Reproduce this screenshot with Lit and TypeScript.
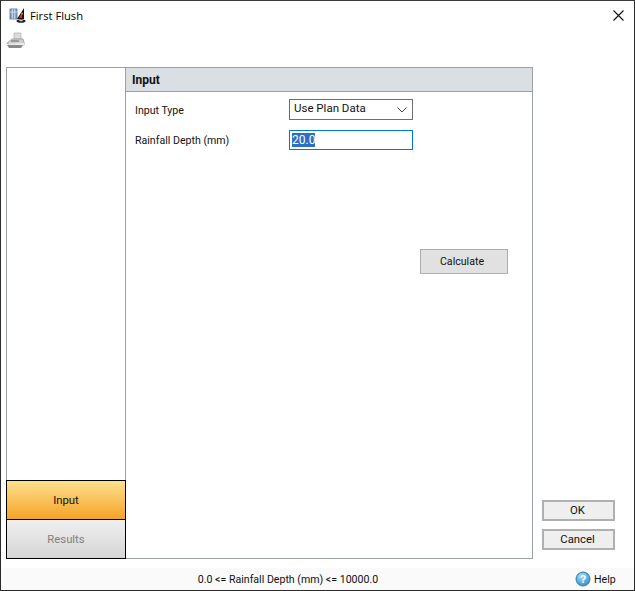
import { LitElement, html, css } from "lit";
import { customElement } from "lit/decorators.js";

@customElement("app-root")
export class AppRoot extends LitElement {
  static styles = css`
    :host { display: block; width: 635px; height: 591px; }
    * { box-sizing: border-box; }
    .win { width: 635px; height: 591px; border: 1px solid #2b2b2b; border-top-color: #3a3a3a; background: #fff; display: flex; flex-direction: column; font: 10.6px Roboto, "Liberation Sans", Arial, sans-serif; color: #111; }
    .title { height: 29px; display: flex; align-items: center; padding: 0 10px 0 8px; flex: none; }
    .title .t { font: 11.2px "Open Sans", sans-serif; margin-left: 4px; color: #000; }
    .close { margin-left: auto; display: flex; }
    .tool { height: 37px; flex: none; padding: 2px 0 0 5px; }
    .main { flex: 1; display: flex; min-height: 0; padding: 0 0 9px 5px; }
    .panel { width: 527px; border: 1px solid #9aa0a4; display: flex; }
    .left { width: 120px; flex: none; display: flex; flex-direction: column; border-right: 1px solid #9aa0a4; margin: 0 0 -1px -1px; }
    .spacer { flex: 1; border-left: 1px solid #9aa0a4; }
    .tab { height: 40px; border: 1px solid #000; display: flex; align-items: center; justify-content: center; margin-right: -1px; font-size: 11.3px; }
    .tab.on { background: linear-gradient(#fde08e, #f5a326); color: #111; }
    .tab.off { margin-top: -1px; background: linear-gradient(#efefef, #d6d6d6); color: #808080; }
    .right { flex: 1; display: flex; flex-direction: column; min-width: 0; }
    .head { height: 24px; background: #dadfe3; border-bottom: 1px solid #9aa0a4; display: flex; align-items: center; padding-left: 6px; font-weight: 700; font-size: 12px; flex: none; }
    .form { flex: 1; padding: 7px 0 0 9px; display: flex; flex-direction: column; }
    .row { display: flex; align-items: center; height: 22px; }
    .row + .row { margin-top: 8px; }
    .row label { width: 154px; flex: none; }
    .select { width: 124px; height: 21px; border: 1px solid #6e6e6e; display: flex; align-items: center; padding: 0 5px 0 4px; justify-content: space-between; margin-top: -1px; font-size: 11.5px; }
    .select span { margin-top: -3px; }
    .input { width: 124px; height: 20px; border: 1px solid #0078d7; display: flex; align-items: center; padding-left: 2px; font-size: 12px; }
    .sel { background: #2a70c4; color: #fff; line-height: 14px; }
    .calcrow { display: flex; justify-content: flex-end; padding-right: 24px; margin-top: 98px; }
    button { font: inherit; color: #111; padding: 0; }
    .calc { width: 88px; height: 25px; background: #e1e1e1; border: 1px solid #adadad; padding-right: 4px; }
    .side { flex: 1; display: flex; flex-direction: column; align-items: flex-end; justify-content: flex-end; padding: 0 19px 9px 0; gap: 8px; }
    .btn { width: 73px; height: 21px; background: #efefef; border: 2px solid #b0b0b0; font-size: 11.3px; padding-right: 2px; }
    .status { height: 22px; flex: none; background: #fafafa; display: flex; align-items: center; }
    .msg { width: 574px; text-align: center; }
    .help { display: flex; align-items: center; gap: 3px; }
  `;

  render() {
    return html`<div class="win">
      <div class="title">
        <svg width="17" height="17" viewBox="0 0 17 17">
          <rect x="1" y="2" width="7" height="10" fill="#7d9fd0" stroke="#4f6fa0" stroke-width="0.8"/>
          <path d="M3.300 2v10M5.700 2v10M1 5h7" stroke="#dce6f4" stroke-width="0.8"/>
          <path d="M8 12 L15 1 V12 Z" fill="#111"/>
          <path d="M10 11l2-4 1.500 1-.5 3z" fill="#d02a2a"/>
          <path d="M12 7l1-2 .8 1.500-.5 1.500z" fill="#e8c02a"/>
          <ellipse cx="12" cy="14" rx="4.500" ry="1.800" fill="#222"/>
          <ellipse cx="12" cy="13.600" rx="2" ry=".7" fill="#ddd"/>
        </svg>
        <span class="t">First Flush</span>
        <span class="close"><svg width="11" height="11" viewBox="0 0 11 11"><path d="M.5.5l10 10M10.500.5l-10 10" stroke="#111" stroke-width="1.100" fill="none"/></svg></span>
      </div>
      <div class="tool">
        <svg width="20" height="18" viewBox="0 0 20 18">
          <path d="M8 1h7v6H8z" fill="#dcdcdc" stroke="#b5b5b5" stroke-width=".8"/>
          <path d="M1 11l5-4h11l1 3v3H3z" fill="#cfcfcf" stroke="#9a9a9a" stroke-width=".8"/>
          <path d="M2 12l12-1 4 0v2H3z" fill="#ececec"/>
          <path d="M1 13h16l-2 3H3z" fill="#8a8a8a"/>
          <path d="M5 9h8" stroke="#666" stroke-width="1"/>
        </svg>
      </div>
      <div class="main">
        <div class="panel">
          <div class="left">
            <div class="spacer"></div>
            <div class="tab on">Input</div>
            <div class="tab off">Results</div>
          </div>
          <div class="right">
            <div class="head">Input</div>
            <div class="form">
              <div class="row"><label>Input Type</label>
                <div class="select"><span>Use Plan Data</span>
                  <svg width="10" height="6" viewBox="0 0 10 6"><path d="M.5.5L5 5 9.500.5" stroke="#444" fill="none"/></svg>
                </div>
              </div>
              <div class="row"><label>Rainfall Depth (mm)</label>
                <div class="input"><span class="sel">20.0</span></div>
              </div>
              <div class="calcrow"><button class="calc">Calculate</button></div>
            </div>
          </div>
        </div>
        <div class="side">
          <button class="btn">OK</button>
          <button class="btn">Cancel</button>
        </div>
      </div>
      <div class="status">
        <div class="msg">0.0 &lt;= Rainfall Depth (mm) &lt;= 10000.0</div>
        <div class="help">
          <svg width="16" height="16" viewBox="0 0 16 16">
            <defs><radialGradient id="h" cx=".4" cy=".3" r=".8"><stop offset="0" stop-color="#a8dcf5"/><stop offset="1" stop-color="#2a86c8"/></radialGradient></defs>
            <circle cx="8" cy="8" r="7" fill="url(#h)" stroke="#2f7fb8"/>
            <text x="8" y="12" font-family="Liberation Sans" font-size="11" font-weight="700" fill="#fff" text-anchor="middle">?</text>
          </svg>
          <span>Help</span>
        </div>
      </div>
    </div>`;
  }
}
